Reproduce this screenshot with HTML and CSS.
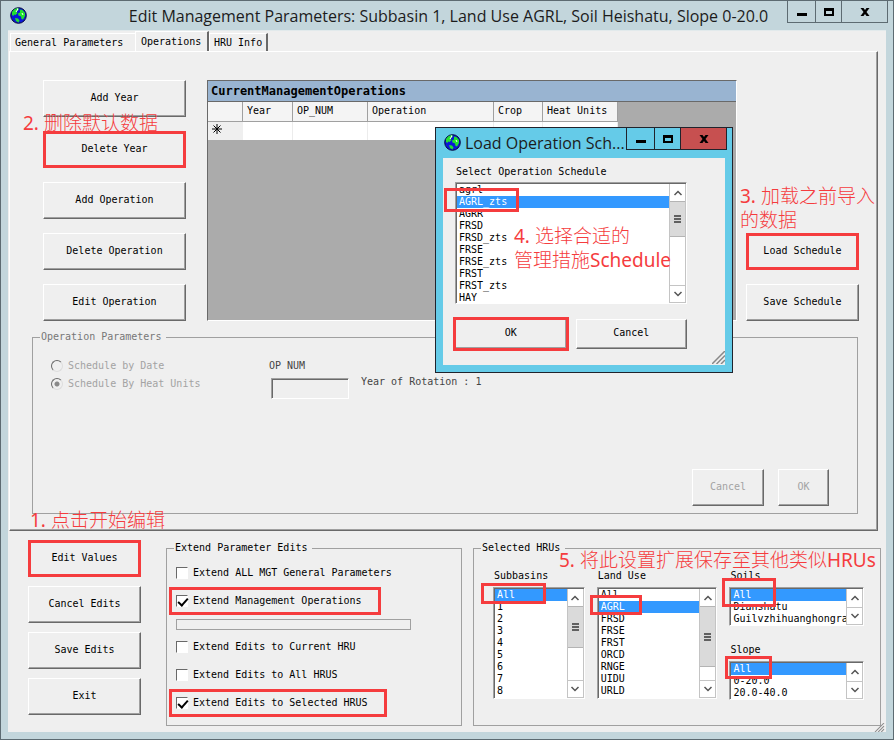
FILE: index.html
```html
<!DOCTYPE html>
<html lang="zh-CN">
<head>
<meta charset="utf-8">
<meta name="viewport" content="width=device-width, initial-scale=1">
<title>Edit Management Parameters</title>
<link rel="stylesheet" href="styles.css">
</head>
<body>
<svg class="defs" aria-hidden="true">
  <symbol id="globe" viewBox="0 0 17 17">
    <circle cx="8.5" cy="8.5" r="7.8" fill="#0a18d8" stroke="#06063a" stroke-width="1"/>
    <path d="M2 5 4 2.500 7 1 9 1.500 8 3.500 6.500 4.500 7.500 6 5.500 8 4 7.500 3.500 9 2 8Z" fill="#22e12e"/>
    <path d="M10 2.500 12.500 3 15 6 15 9 13 12.500 11.500 12 11 9.500 8.500 8.500 8 6.500 10 5.500Z" fill="#22e12e"/>
    <path d="M5 11 8 11.500 9.500 13.500 8.500 15.500 6 14Z" fill="#22e12e"/>
    <path d="M7 2 8 2 6 5M12 6 13 8" stroke="#fff" stroke-width="1" fill="none"/>
  </symbol>
  <symbol id="min" viewBox="0 0 12 12"><path d="M1 7h10v3H1z"/></symbol>
  <symbol id="max" viewBox="0 0 12 12"><path d="M1 2h10v8H1zM3 5v3h6V5z" fill-rule="evenodd"/></symbol>
  <symbol id="close" viewBox="0 0 12 12"><path d="M1.500 2h3L6 4l1.500-2h3L7.500 6l3 4h-3L6 8l-1.500 2h-3l3-4z"/></symbol>
  <symbol id="up" viewBox="0 0 10 10"><path d="M1.500 7 5 3.500 8.500 7" fill="none" stroke="#555" stroke-width="1.500"/></symbol>
  <symbol id="down" viewBox="0 0 10 10"><path d="M1.500 3 5 6.500 8.500 3" fill="none" stroke="#555" stroke-width="1.500"/></symbol>
  <symbol id="grip" viewBox="0 0 13 13"><path d="M0 13 13 0M4.500 13 13 4.500M9 13l4-4" fill="none" stroke="#888" stroke-width="1.500"/></symbol>
</svg>

<div class="window">
  <header class="titlebar">
    <svg class="globe"><use href="#globe"/></svg>
    <h1>Edit Management Parameters: Subbasin 1, Land Use AGRL, Soil Heishatu, Slope 0-20.0</h1>
    <div class="caption-buttons">
      <button type="button" aria-label="Minimize"><svg><use href="#min"/></svg></button>
      <button type="button" class="maximize" aria-label="Maximize"><svg><use href="#max"/></svg></button>
      <button type="button" class="close" aria-label="Close"><svg><use href="#close"/></svg></button>
    </div>
  </header>

  <main class="client">
    <nav class="tabs">
      <button type="button" class="tab tab-first">General Parameters</button>
      <button type="button" class="tab tab-current">Operations</button>
      <button type="button" class="tab tab-last">HRU Info</button>
    </nav>

    <section class="panel">
      <div class="operations">
        <div class="stack">
          <button type="button" class="btn">Add Year</button>
          <button type="button" class="btn marked">Delete Year</button>
          <button type="button" class="btn">Add Operation</button>
          <button type="button" class="btn">Delete Operation</button>
          <button type="button" class="btn">Edit Operation</button>
        </div>
        <div class="datagrid">
          <table>
            <caption>CurrentManagementOperations</caption>
            <thead><tr><th></th><th>Year</th><th>OP_NUM</th><th>Operation</th><th>Crop</th><th>Heat Units</th></tr></thead>
            <tbody><tr><th><svg class="newrow" viewBox="0 0 10 10"><path d="M5 0v10M0 5h10M1.500 1.500l7 7M8.500 1.500l-7 7" stroke="#000"/></svg></th><td></td><td></td><td></td><td></td><td></td></tr></tbody>
          </table>
        </div>
        <div class="stack stack-end">
          <button type="button" class="btn btn-default marked">Load Schedule</button>
          <button type="button" class="btn">Save Schedule</button>
        </div>
      </div>

      <fieldset class="group params">
        <legend>Operation Parameters</legend>
        <div class="params-row">
          <div class="radios">
            <label><input type="radio" name="mode" disabled>Schedule by Date</label>
            <label><input type="radio" name="mode" checked disabled>Schedule By Heat Units</label>
          </div>
          <div class="opnum">
            <label for="opnum">OP NUM</label>
            <input id="opnum" type="text">
          </div>
          <span class="rotation">Year of Rotation : 1</span>
        </div>
        <div class="params-actions">
          <button type="button" class="btn btn-cancel" disabled>Cancel</button>
          <button type="button" class="btn btn-ok" disabled>OK</button>
        </div>
      </fieldset>
    </section>

    <section class="bottom">
      <div class="edit-actions">
        <button type="button" class="btn marked">Edit Values</button>
        <button type="button" class="btn">Cancel Edits</button>
        <button type="button" class="btn">Save Edits</button>
        <button type="button" class="btn">Exit</button>
      </div>

      <fieldset class="group extend">
        <legend>Extend Parameter Edits</legend>
        <label class="check"><input type="checkbox">Extend ALL MGT General Parameters</label>
        <label class="check boxed"><input type="checkbox" checked>Extend Management Operations</label>
        <div class="progress" role="progressbar" aria-label="Progress"></div>
        <label class="check"><input type="checkbox">Extend Edits to Current HRU</label>
        <label class="check"><input type="checkbox">Extend Edits to All HRUS</label>
        <label class="check boxed"><input type="checkbox" checked>Extend Edits to Selected HRUS</label>
      </fieldset>

      <fieldset class="group hrus">
        <legend>Selected HRUs</legend>
        <div class="hru-lists">
          <div class="field">
            <label for="sub">Subbasins</label>
            <div class="listbox tall">
              <select id="sub" size="9"><option selected>All</option><option>1</option><option>2</option><option>3</option><option>4</option><option>5</option><option>6</option><option>7</option><option>8</option></select>
              <div class="scroll"><i class="arrow"><svg><use href="#up"/></svg></i><i class="thumb thumb-sub"></i><i class="arrow arrow-down"><svg><use href="#down"/></svg></i></div>
              <span class="mark mark-sub"></span>
            </div>
          </div>
          <div class="field">
            <label for="land">Land Use</label>
            <div class="listbox tall">
              <select id="land" size="9"><option>All</option><option selected>AGRL</option><option>FRSD</option><option>FRSE</option><option>FRST</option><option>ORCD</option><option>RNGE</option><option>UIDU</option><option>URLD</option></select>
              <div class="scroll"><i class="arrow"><svg><use href="#up"/></svg></i><i class="thumb thumb-land"></i><i class="arrow arrow-down"><svg><use href="#down"/></svg></i></div>
              <span class="mark mark-land"></span>
            </div>
          </div>
          <div class="field-pair">
            <div class="field">
              <label for="soil">Soils</label>
              <div class="listbox short">
                <select id="soil" size="3"><option selected>All</option><option>Dianshatu</option><option>Guilvzhihuanghongra</option></select>
                <div class="scroll"><i class="arrow"><svg><use href="#up"/></svg></i><i class="arrow arrow-down"><svg><use href="#down"/></svg></i></div>
                <span class="mark mark-soil"></span>
              </div>
            </div>
            <div class="field">
              <label for="slope">Slope</label>
              <div class="listbox short">
                <select id="slope" size="3"><option selected>All</option><option>0-20.0</option><option>20.0-40.0</option></select>
                <div class="scroll"><i class="arrow"><svg><use href="#up"/></svg></i><i class="arrow arrow-down"><svg><use href="#down"/></svg></i></div>
                <span class="mark mark-slope"></span>
              </div>
            </div>
          </div>
        </div>
      </fieldset>
      <svg class="grip grip-window"><use href="#grip"/></svg>
    </section>
  </main>

  <div class="dialog" role="dialog" aria-label="Load Operation Schedule">
    <header class="titlebar">
      <svg class="globe"><use href="#globe"/></svg>
      <h2>Load Operation Sch...</h2>
      <div class="caption-buttons">
        <button type="button" aria-label="Minimize"><svg><use href="#min"/></svg></button>
        <button type="button" class="maximize" aria-label="Maximize"><svg><use href="#max"/></svg></button>
        <button type="button" class="close" aria-label="Close"><svg><use href="#close"/></svg></button>
      </div>
    </header>
    <div class="dialog-body">
      <div class="field">
        <label for="sched">Select Operation Schedule</label>
        <div class="listbox sched">
          <select id="sched" size="10"><option>agrl</option><option selected>AGRL_zts</option><option>AGRR</option><option>FRSD</option><option>FRSD_zts</option><option>FRSE</option><option>FRSE_zts</option><option>FRST</option><option>FRST_zts</option><option>HAY</option></select>
          <div class="scroll"><i class="arrow"><svg><use href="#up"/></svg></i><i class="thumb thumb-sched"></i><i class="arrow arrow-down"><svg><use href="#down"/></svg></i></div>
          <span class="mark mark-sched"></span>
        </div>
      </div>
      <div class="dialog-actions">
        <button type="button" class="btn marked">OK</button>
        <button type="button" class="btn">Cancel</button>
      </div>
      <svg class="grip"><use href="#grip"/></svg>
    </div>
  </div>

  <p class="note note-1"><b>1.</b> 点击开始编辑</p>
  <p class="note note-2"><b>2.</b> 删除默认数据</p>
  <p class="note note-3"><b>3.</b> 加载之前导入<br>的数据</p>
  <p class="note note-4"><b>4.</b> 选择合适的<br>管理措施<b>Schedule</b></p>
  <p class="note note-5"><b>5.</b> 将此设置扩展保存至其他类似<b>HRUs</b></p>
</div>
</body>
</html>
```
FILE: styles.css
```css
:root {
  --face: #efefef;
  --frame: #c3d6dc;
  --edge: #5d6b72;
  --light: #fff;
  --shade: #a0a0a0;
  --dark: #696969;
  --red: #f53c3e;
  --blue: #3399ff;
}

* { box-sizing: border-box; }

body {
  margin: 0;
  font: 10px/12px "DejaVu Sans Mono", monospace;
  color: #000;
}

button, input, select { font: inherit; color: inherit; }

.defs { position: absolute; width: 0; height: 0; }

.window {
  position: relative;
  display: flex;
  flex-direction: column;
  min-height: 100vh;
  padding: 0 7px 7px;
  border: 1px solid var(--edge);
  background: var(--frame);
}

/* Title bars */
.titlebar {
  display: flex;
  align-items: center;
  height: 29px;
}

.titlebar h1, .titlebar h2 {
  flex: 1;
  margin: 0;
  font: 400 16px/24px "Open Sans", "Noto Sans", sans-serif;
  color: #1c1c1c;
  white-space: nowrap;
}

.titlebar h1 { padding-left: 83px; text-align: center; }

.globe { flex: none; width: 17px; height: 17px; margin-left: 2px; }

.caption-buttons {
  display: flex;
  align-self: flex-start;
  height: 22px;
  margin-right: -2px;
  border: 1px solid var(--edge);
  border-top: 0;
}

.caption-buttons button {
  display: grid;
  place-items: center;
  width: 28px;
  padding: 0;
  border: 0;
  border-right: 1px solid var(--edge);
  background: none;
}

.caption-buttons .maximize { width: 26px; }
.caption-buttons .close { width: 45px; border-right: 0; }
.caption-buttons svg { width: 12px; height: 12px; }

/* Main window body */
.client {
  flex: 1;
  display: flex;
  flex-direction: column;
  background: var(--face);
  border-top: 1px solid #e2eaec;
}

.tabs {
  display: flex;
  align-items: flex-end;
  height: 20px;
  padding-left: 2px;
}

.tab {
  height: 18px;
  padding: 0 4px;
  border: 1px solid var(--light);
  border-width: 1px 0 0 1px;
  background: none;
  text-align: left;
  white-space: nowrap;
}

.tab-first { width: 125px; }

.tab-current {
  align-self: flex-start;
  width: 74px;
  height: 21px;
  padding: 0 5px;
  border-right: 2px solid var(--dark);
  background: var(--face);
}

.tab-last { width: 59px; border-right: 2px solid var(--dark); }

.panel {
  margin: 0 8px 0 1px;
  padding: 28px 18px 16px 33px;
  border: 1px solid var(--light);
  border-right: 1px solid var(--dark);
  border-bottom: 1px solid var(--dark);
  box-shadow: inset -1px -1px var(--shade);
}

.operations {
  display: grid;
  grid-template-columns: 143px 1fr 113px;
  column-gap: 9px;
}

.stack { display: flex; flex-direction: column; gap: 14px; }
.stack-end { justify-content: flex-end; }

.btn {
  height: 37px;
  padding: 0 0 2px;
  border: 1px solid var(--light);
  border-right: 1px solid var(--dark);
  border-bottom: 1px solid var(--dark);
  box-shadow: inset -1px -1px var(--shade);
  background: var(--face);
}

.btn:disabled { color: #a3a3a3; }
.btn-default { border-bottom-color: #000; }

.marked { outline: 3px solid var(--red); outline-offset: -3px; }

/* Data grid */
.datagrid {
  margin-left: 12px;
  border: 1px solid var(--dark);
  border-right-color: var(--light);
  border-bottom-color: var(--light);
  background: #ababab;
}

.datagrid table { display: grid; grid-template-columns: minmax(0, 1fr); }

.datagrid caption {
  display: block;
  height: 21px;
  padding-left: 3px;
  border-bottom: 1px solid var(--dark);
  background: #99b4d1;
  font: 700 12px/20px "DejaVu Sans Mono", monospace;
  text-align: left;
}

.datagrid thead, .datagrid tbody { display: block; }

.datagrid tr {
  display: grid;
  grid-template-columns: 35px 50px 75px 126px 49px 75px;
  justify-content: start;
}

.datagrid th, .datagrid td {
  height: 18px;
  padding: 0 4px;
  font-weight: 400;
  line-height: 18px;
  text-align: left;
}

.datagrid thead th {
  height: 20px;
  border-right: 1px solid var(--shade);
  border-bottom: 1px solid var(--shade);
  background: #f4f4f4;
}

.datagrid td { background: #fff; border-right: 1px solid #ececec; }
.datagrid tbody th { background: var(--face); }
.newrow { width: 10px; height: 10px; }

/* Group boxes */
.group {
  min-width: 0;
  margin: 0;
  padding: 0;
  border: 1px solid var(--shade);
}

.group legend { padding: 0 5px 0 1px; }

.params {
  margin: 10px 1px 0 -11px;
  padding: 17px 28px 7px 18px;
  color: #444;
}

.params legend { margin-left: -11px; color: #777; }

.params-row { display: grid; grid-template-columns: 218px 80px 1fr; height: 109px; }
.radios { display: flex; flex-direction: column; gap: 6px; color: #a3a3a3; }
.radios label { display: flex; align-items: center; gap: 5px; }

.radios input {
  appearance: none;
  width: 12px;
  height: 12px;
  margin: 0;
  border: 1px solid #ddd;
  border-top-color: var(--dark);
  border-left-color: var(--dark);
  border-radius: 50%;
}

.radios input:checked { background: radial-gradient(circle, #888 0 2px, transparent 3px); }

.opnum { display: flex; flex-direction: column; gap: 6px; }

.opnum input {
  width: 78px;
  height: 21px;
  margin-left: 2px;
  border: 1px solid var(--light);
  border-top-color: var(--shade);
  border-left-color: var(--shade);
  box-shadow: inset 1px 1px var(--dark);
  background: var(--face);
}

.rotation { padding: 16px 0 0 12px; }

.params-actions { display: flex; justify-content: flex-end; gap: 14px; }
.btn-cancel { width: 72px; }
.btn-ok { width: 51px; }

/* Lower area */
.bottom {
  position: relative;
  flex: 1;
  display: grid;
  grid-template-columns: 113px 321fr 419fr;
  align-items: start;
  padding: 9px 5px 6px 20px;
}

.edit-actions { display: flex; flex-direction: column; gap: 9px; }

.extend, .hrus { height: 184px; margin-top: 2px; }
.extend { margin-left: 25px; padding: 5px 0 0 9px; }
.extend legend { margin-left: -2px; }
.hrus { margin-left: 11px; padding: 16px 16px 0 19px; }
.hrus legend { margin-left: -12px; }

.check {
  position: relative;
  display: flex;
  align-items: center;
  gap: 5px;
  width: max-content;
  height: 28px;
}

.check input {
  appearance: none;
  width: 12px;
  height: 12px;
  margin: 0;
  border: 1px solid var(--light);
  border-top-color: var(--dark);
  border-left-color: var(--dark);
  background: #fff;
}

.check input:checked::after {
  content: "";
  display: block;
  width: 8px;
  height: 4px;
  margin: 2px 0 0 1px;
  border: solid #000;
  border-width: 0 0 2px 2px;
  rotate: -48deg;
}

.boxed::after {
  content: "";
  position: absolute;
  inset: 0 -19px 0 -7px;
  border: 3px solid var(--red);
}

.progress {
  width: 235px;
  height: 11px;
  margin: 4px 0 3px;
  border: 1px solid var(--shade);
}

.hru-lists {
  display: grid;
  grid-template-columns: 92fr 121fr 135fr;
  column-gap: 12px;
}

.field, .field-pair { display: flex; flex-direction: column; min-width: 0; }
.field { gap: 5px; }
.field-pair { gap: 18px; }
.field > label { padding-left: 1px; }

/* List boxes */
.listbox {
  position: relative;
  display: flex;
  padding: 1px 0 0 1px;
  border: 1px solid var(--light);
  border-top-color: var(--shade);
  border-left-color: var(--shade);
  box-shadow: inset 1px 1px var(--dark);
  background: #fff;
}

.tall { height: 112px; }
.short { height: 39px; }
.sched { height: 122px; }

.listbox select {
  flex: 1;
  min-width: 0;
  height: 100%;
  padding: 0;
  border: 0;
  border-radius: 0;
  outline: 0;
  overflow: hidden;
  background: #fff;
}

.listbox option { min-height: 12px; padding: 0 2px; line-height: 12px; color: #000; }
.listbox option:checked { background: var(--blue) linear-gradient(var(--blue), var(--blue)); color: #fff; }

.scroll {
  flex: none;
  display: flex;
  flex-direction: column;
  width: 17px;
  border: 1px solid #c4c4c4;
  border-top: 0;
}

.arrow { display: grid; place-items: center; height: 17px; min-height: 0; }
.arrow-down { margin-top: auto; border-top: 1px solid #c4c4c4; }
.arrow svg { width: 10px; height: 10px; }

.thumb {
  display: grid;
  place-items: center;
  border: 1px solid #b4b4b4;
  border-width: 1px 0;
  background: #dadada;
}

.thumb::before {
  content: "";
  width: 7px;
  height: 8px;
  background: repeating-linear-gradient(#606060 0 2px, transparent 2px 3px);
}

.thumb-sub { height: 42px; }
.thumb-land { height: 61px; }
.thumb-sched { height: 36px; }

.mark { position: absolute; border: 3px solid var(--red); }
.mark-sub { inset: -5px auto auto -13px; width: 65px; height: 21px; }
.mark-land { inset: 7px auto auto -8px; width: 52px; height: 20px; }
.mark-soil { inset: -10px auto auto -8px; width: 54px; height: 29px; }
.mark-slope { inset: -6px auto auto -5px; width: 47px; height: 23px; }
.mark-sched { inset: 5px auto auto -12px; width: 75px; height: 24px; }

.grip { position: absolute; right: 0; bottom: 1px; width: 13px; height: 13px; }
.grip-window { bottom: 0; height: 9px; }

/* Dialog */
.dialog {
  position: absolute;
  top: 126px;
  left: 434px;
  width: 298px;
  padding: 0 7px 7px;
  border: 1px solid #20232c;
  background: #65cbe8;
}

.dialog .globe { margin-left: 1px; }
.dialog h2 { padding-left: 4px; }
.dialog .caption-buttons, .dialog .caption-buttons button { border-color: #20232c; }
.dialog .close { background: #c75050; }

.dialog-body {
  position: relative;
  margin-top: 1px;
  padding: 8px 38px 16px 12px;
  background: var(--face);
}

.dialog-body .field { gap: 4px; }

.dialog-actions {
  display: grid;
  grid-template-columns: 1fr 1fr;
  gap: 9px;
  margin-top: 15px;
}

.dialog-actions .btn { height: 30px; }
.dialog-actions .marked { outline-offset: -1px; }

/* Instruction notes */
.note {
  position: absolute;
  margin: 0;
  font: 300 19px/24px "Noto Sans", "Noto Sans CJK SC", sans-serif;
  color: var(--red);
  white-space: nowrap;
}

.note b { font-weight: 400; }
.note-1 { top: 507px; left: 29px; }
.note-2 { top: 110px; left: 22px; }
.note-3 { top: 183px; left: 739px; }
.note-4 { top: 223px; left: 513px; }
.note-5 { top: 547px; left: 558px; }
```
